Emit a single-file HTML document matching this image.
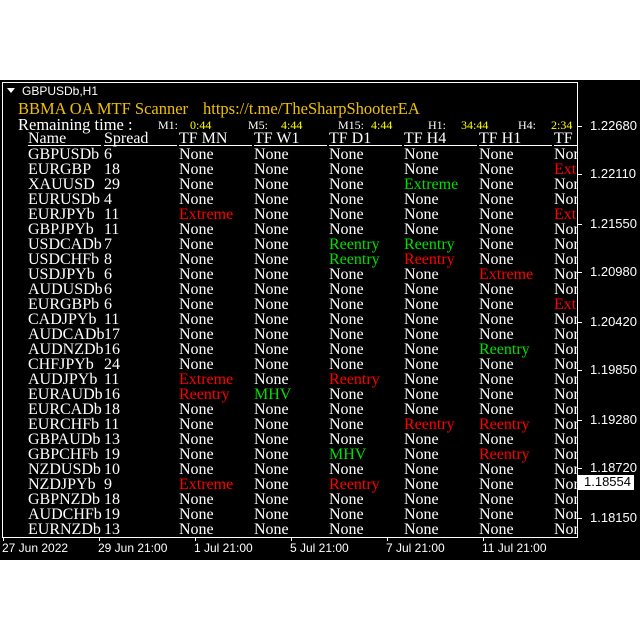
<!DOCTYPE html>
<html><head><meta charset="utf-8"><style>
body{margin:0;width:640px;height:640px;background:#fff;position:relative;overflow:hidden;font-family:"Liberation Serif",serif}
#blk{position:absolute;left:0;top:80px;width:640px;height:480px;background:#000}
#fr{position:absolute;left:2px;top:82px;width:574px;height:454px;border:1px solid #fff;overflow:hidden}
.a{position:absolute;white-space:nowrap}
.r{position:absolute;left:0;height:15px;line-height:15px;font-size:16px;color:#fff;width:600px}
.r span{position:absolute;top:0}
.c0{left:25px}.c1{left:101px}.c2{left:176px}.c3{left:251px}.c4{left:326px}.c5{left:401px}.c6{left:476px}.c7{left:551px}
.g{color:#00e000}.d{color:#ff0000}
.u{position:absolute;top:62px;height:1px;background:#fff}
.s{font-family:"Liberation Sans",sans-serif;font-size:12px;color:#fff}
.p{position:absolute;left:590px;font-family:"Liberation Sans",sans-serif;font-size:13px;color:#fff;line-height:14px}
.t{position:absolute;left:577px;width:5px;height:1px;background:#fff}
.x{position:absolute;top:537px;width:1px;height:4px;background:#fff}
.xl{position:absolute;top:541px;font-family:"Liberation Sans",sans-serif;font-size:12px;color:#fff;line-height:14px}
</style></head><body>
<div id="blk"></div>
<div id="fr">
<div class="a" style="left:4px;top:5px;width:0;height:0;border-left:4px solid transparent;border-right:4px solid transparent;border-top:5px solid #fff"></div>
<div class="a s" style="left:19px;top:1px">GBPUSDb,H1</div>
<div class="a" style="left:15px;top:16px;font-size:16.5px;color:#f0c000">BBMA OA MTF Scanner</div>
<div class="a" style="left:200px;top:16px;font-size:16.5px;color:#f0c000">https://t.me/TheSharpShooterEA</div>
<div class="a" style="left:15px;top:32px;font-size:16.5px;color:#fff">Remaining time :</div>
<div class="a" style="left:155px;top:35px;font-size:12px;color:#fff">M1:</div><div class="a" style="left:187px;top:35px;font-size:12px;color:#ff0">0:44</div>
<div class="a" style="left:245px;top:35px;font-size:12px;color:#fff">M5:</div><div class="a" style="left:278px;top:35px;font-size:12px;color:#ff0">4:44</div>
<div class="a" style="left:335px;top:35px;font-size:12px;color:#fff">M15:</div><div class="a" style="left:368px;top:35px;font-size:12px;color:#ff0">4:44</div>
<div class="a" style="left:425px;top:35px;font-size:12px;color:#fff">H1:</div><div class="a" style="left:458px;top:35px;font-size:12px;color:#ff0">34:44</div>
<div class="a" style="left:515px;top:35px;font-size:12px;color:#fff">H4:</div><div class="a" style="left:548px;top:35px;font-size:12px;color:#ff0">2:34</div>
<div class="r" style="top:48px"><span class="c0">Name</span><span class="c1">Spread</span><span class="c2">TF MN</span><span class="c3">TF W1</span><span class="c4">TF D1</span><span class="c5">TF H4</span><span class="c6">TF H1</span><span class="c7">TF</span></div>
<div class="u" style="left:25px;width:73px"></div><div class="u" style="left:101px;width:73px"></div><div class="u" style="left:176px;width:73px"></div><div class="u" style="left:251px;width:73px"></div><div class="u" style="left:326px;width:73px"></div><div class="u" style="left:401px;width:73px"></div><div class="u" style="left:476px;width:73px"></div><div class="u" style="left:551px;width:73px"></div>
<div class="r" style="top:64px"><span class="c0">GBPUSDb</span><span class="c1">6</span><span class="c2">None</span><span class="c3">None</span><span class="c4">None</span><span class="c5">None</span><span class="c6">None</span><span class="c7">None</span></div>
<div class="r" style="top:79px"><span class="c0">EURGBP</span><span class="c1">18</span><span class="c2">None</span><span class="c3">None</span><span class="c4">None</span><span class="c5">None</span><span class="c6">None</span><span class="c7 d">Extreme</span></div>
<div class="r" style="top:94px"><span class="c0">XAUUSD</span><span class="c1">29</span><span class="c2">None</span><span class="c3">None</span><span class="c4">None</span><span class="c5 g">Extreme</span><span class="c6">None</span><span class="c7">None</span></div>
<div class="r" style="top:109px"><span class="c0">EURUSDb</span><span class="c1">4</span><span class="c2">None</span><span class="c3">None</span><span class="c4">None</span><span class="c5">None</span><span class="c6">None</span><span class="c7">None</span></div>
<div class="r" style="top:124px"><span class="c0">EURJPYb</span><span class="c1">11</span><span class="c2 d">Extreme</span><span class="c3">None</span><span class="c4">None</span><span class="c5">None</span><span class="c6">None</span><span class="c7 d">Extreme</span></div>
<div class="r" style="top:139px"><span class="c0">GBPJPYb</span><span class="c1">11</span><span class="c2">None</span><span class="c3">None</span><span class="c4">None</span><span class="c5">None</span><span class="c6">None</span><span class="c7">None</span></div>
<div class="r" style="top:154px"><span class="c0">USDCADb</span><span class="c1">7</span><span class="c2">None</span><span class="c3">None</span><span class="c4 g">Reentry</span><span class="c5 g">Reentry</span><span class="c6">None</span><span class="c7">None</span></div>
<div class="r" style="top:169px"><span class="c0">USDCHFb</span><span class="c1">8</span><span class="c2">None</span><span class="c3">None</span><span class="c4 g">Reentry</span><span class="c5 d">Reentry</span><span class="c6">None</span><span class="c7">None</span></div>
<div class="r" style="top:184px"><span class="c0">USDJPYb</span><span class="c1">6</span><span class="c2">None</span><span class="c3">None</span><span class="c4">None</span><span class="c5">None</span><span class="c6 d">Extreme</span><span class="c7">None</span></div>
<div class="r" style="top:199px"><span class="c0">AUDUSDb</span><span class="c1">6</span><span class="c2">None</span><span class="c3">None</span><span class="c4">None</span><span class="c5">None</span><span class="c6">None</span><span class="c7">None</span></div>
<div class="r" style="top:214px"><span class="c0">EURGBPb</span><span class="c1">6</span><span class="c2">None</span><span class="c3">None</span><span class="c4">None</span><span class="c5">None</span><span class="c6">None</span><span class="c7 d">Extreme</span></div>
<div class="r" style="top:229px"><span class="c0">CADJPYb</span><span class="c1">11</span><span class="c2">None</span><span class="c3">None</span><span class="c4">None</span><span class="c5">None</span><span class="c6">None</span><span class="c7">None</span></div>
<div class="r" style="top:244px"><span class="c0">AUDCADb</span><span class="c1">17</span><span class="c2">None</span><span class="c3">None</span><span class="c4">None</span><span class="c5">None</span><span class="c6">None</span><span class="c7">None</span></div>
<div class="r" style="top:259px"><span class="c0">AUDNZDb</span><span class="c1">16</span><span class="c2">None</span><span class="c3">None</span><span class="c4">None</span><span class="c5">None</span><span class="c6 g">Reentry</span><span class="c7">None</span></div>
<div class="r" style="top:274px"><span class="c0">CHFJPYb</span><span class="c1">24</span><span class="c2">None</span><span class="c3">None</span><span class="c4">None</span><span class="c5">None</span><span class="c6">None</span><span class="c7">None</span></div>
<div class="r" style="top:289px"><span class="c0">AUDJPYb</span><span class="c1">11</span><span class="c2 d">Extreme</span><span class="c3">None</span><span class="c4 d">Reentry</span><span class="c5">None</span><span class="c6">None</span><span class="c7">None</span></div>
<div class="r" style="top:304px"><span class="c0">EURAUDb</span><span class="c1">16</span><span class="c2 d">Reentry</span><span class="c3 g">MHV</span><span class="c4">None</span><span class="c5">None</span><span class="c6">None</span><span class="c7">None</span></div>
<div class="r" style="top:319px"><span class="c0">EURCADb</span><span class="c1">18</span><span class="c2">None</span><span class="c3">None</span><span class="c4">None</span><span class="c5">None</span><span class="c6">None</span><span class="c7">None</span></div>
<div class="r" style="top:334px"><span class="c0">EURCHFb</span><span class="c1">11</span><span class="c2">None</span><span class="c3">None</span><span class="c4">None</span><span class="c5 d">Reentry</span><span class="c6 d">Reentry</span><span class="c7">None</span></div>
<div class="r" style="top:349px"><span class="c0">GBPAUDb</span><span class="c1">13</span><span class="c2">None</span><span class="c3">None</span><span class="c4">None</span><span class="c5">None</span><span class="c6">None</span><span class="c7">None</span></div>
<div class="r" style="top:364px"><span class="c0">GBPCHFb</span><span class="c1">19</span><span class="c2">None</span><span class="c3">None</span><span class="c4 g">MHV</span><span class="c5">None</span><span class="c6 d">Reentry</span><span class="c7">None</span></div>
<div class="r" style="top:379px"><span class="c0">NZDUSDb</span><span class="c1">10</span><span class="c2">None</span><span class="c3">None</span><span class="c4">None</span><span class="c5">None</span><span class="c6">None</span><span class="c7">None</span></div>
<div class="r" style="top:394px"><span class="c0">NZDJPYb</span><span class="c1">9</span><span class="c2 d">Extreme</span><span class="c3">None</span><span class="c4 d">Reentry</span><span class="c5">None</span><span class="c6">None</span><span class="c7">None</span></div>
<div class="r" style="top:409px"><span class="c0">GBPNZDb</span><span class="c1">18</span><span class="c2">None</span><span class="c3">None</span><span class="c4">None</span><span class="c5">None</span><span class="c6">None</span><span class="c7">None</span></div>
<div class="r" style="top:424px"><span class="c0">AUDCHFb</span><span class="c1">19</span><span class="c2">None</span><span class="c3">None</span><span class="c4">None</span><span class="c5">None</span><span class="c6">None</span><span class="c7">None</span></div>
<div class="r" style="top:439px"><span class="c0">EURNZDb</span><span class="c1">13</span><span class="c2">None</span><span class="c3">None</span><span class="c4">None</span><span class="c5">None</span><span class="c6">None</span><span class="c7">None</span></div>
</div>
<div class="t" style="top:126px"></div><div class="p" style="top:119px">1.22680</div>
<div class="t" style="top:174px"></div><div class="p" style="top:167px">1.22110</div>
<div class="t" style="top:224px"></div><div class="p" style="top:217px">1.21550</div>
<div class="t" style="top:272px"></div><div class="p" style="top:265px">1.20980</div>
<div class="t" style="top:322px"></div><div class="p" style="top:315px">1.20420</div>
<div class="t" style="top:370px"></div><div class="p" style="top:363px">1.19850</div>
<div class="t" style="top:420px"></div><div class="p" style="top:413px">1.19280</div>
<div class="t" style="top:468px"></div><div class="p" style="top:461px">1.18720</div>
<div class="a" style="left:578px;top:475px;width:56px;height:15px;background:#fff"></div><div class="p" style="top:475px;left:584px;color:#000">1.18554</div>
<div class="t" style="top:518px"></div><div class="p" style="top:511px">1.18150</div>
<div class="x" style="left:3px"></div><div class="xl" style="left:2px">27 Jun 2022</div>
<div class="x" style="left:99px"></div><div class="xl" style="left:98px">29 Jun 21:00</div>
<div class="x" style="left:195px"></div><div class="xl" style="left:194px">1 Jul 21:00</div>
<div class="x" style="left:291px"></div><div class="xl" style="left:290px">5 Jul 21:00</div>
<div class="x" style="left:387px"></div><div class="xl" style="left:386px">7 Jul 21:00</div>
<div class="x" style="left:483px"></div><div class="xl" style="left:482px">11 Jul 21:00</div>
</body></html>
